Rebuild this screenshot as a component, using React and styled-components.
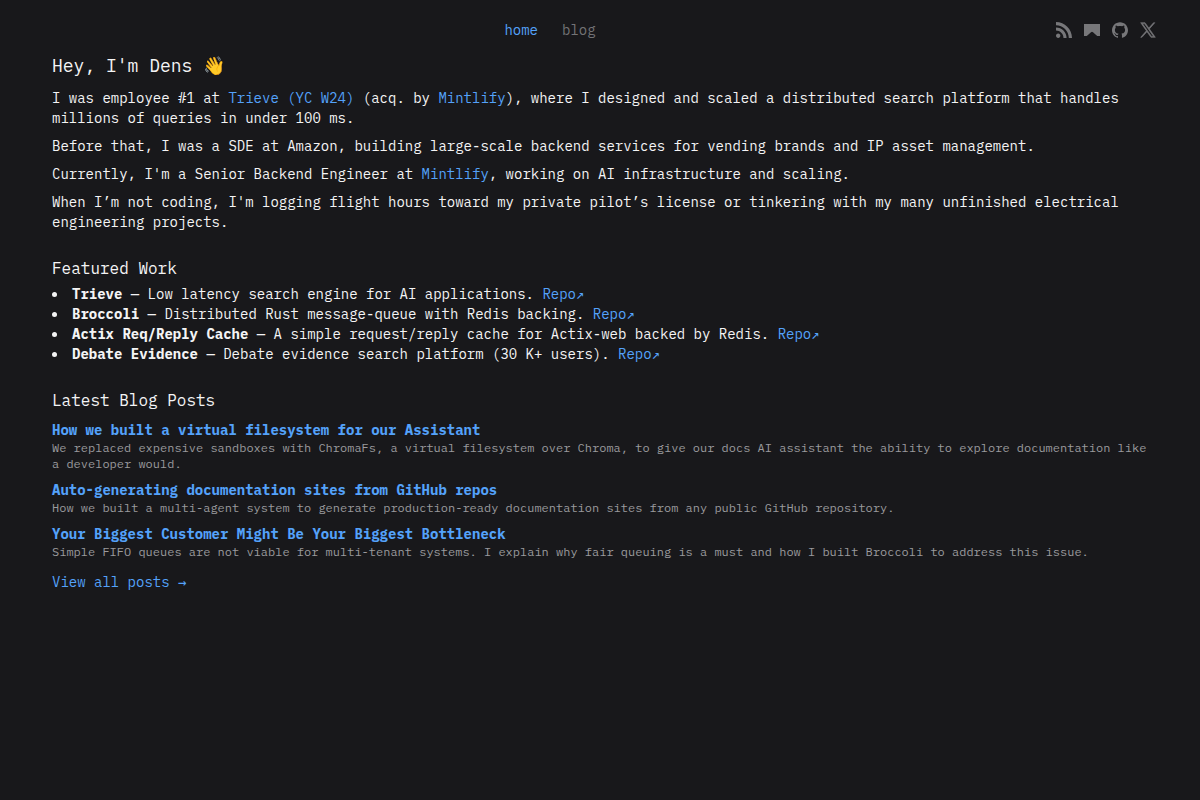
import React from 'react'
import styled, { createGlobalStyle } from 'styled-components'
import { SiGithub, SiRss } from 'react-icons/si'

const GlobalStyle = createGlobalStyle`
  *, *::before, *::after {
    box-sizing: border-box;
    margin: 0;
    padding: 0;
  }

  body {
    min-height: 100vh;
    background: #18181b;
    color: #f4f4f5;
    font-family: 'IBM Plex Mono', 'Liberation Mono', monospace;
    font-size: 14px;
    line-height: 20px;
  }
`

const Page = styled.div`
  padding: 20px 44px 0;
`

const Header = styled.header`
  display: flex;
  align-items: center;
  justify-content: space-between;
  height: 20px;
`

const Main = styled.main`
  padding: 12px 0 0 8px;
  margin-right: -4px;
`

const Nav = styled.nav`
  display: flex;
  gap: 24px;
`

const NavLink = styled.a`
  color: ${({ $active }) => ($active ? '#54a2fa' : '#737376')};
  text-decoration: none;
`

const Socials = styled.div`
  display: flex;
  gap: 12px;
`

const SocialLink = styled.a`
  display: flex;
  color: #77777a;

  svg {
    width: 16px;
    height: 16px;
  }
`

const Title = styled.h1`
  font-size: 18px;
  font-weight: 400;
  line-height: 28px;
  margin-bottom: 8px;
`

const SectionTitle = styled.h2`
  font-size: 16px;
  font-weight: 400;
  line-height: 24px;
`

const Intro = styled.div`
  display: flex;
  flex-direction: column;
  gap: 8px;
`

const Section = styled.section`
  margin-top: 24px;
`

const A = styled.a`
  color: #54a2fa;
  text-decoration: none;
`

const Arrow = styled.span`
  font-family: ${({ $font }) => $font || "'Liberation Mono'"}, monospace;
  line-height: 1;
`

const WorkList = styled.ul`
  margin-top: 4px;
  list-style: disc inside;
`

const Posts = styled.div`
  margin-top: 8px;
  display: flex;
  flex-direction: column;
  gap: 8px;
`

const PostTitle = styled.a`
  display: block;
  color: #54a2fa;
  font-weight: 700;
  text-decoration: none;
`

const PostText = styled.p`
  color: #9a9a9d;
  font-size: 12px;
  line-height: 16px;
`

const AllPosts = styled(A)`
  display: inline-block;
  margin-top: 12px;
`

const BannerIcon = () => (
  <svg viewBox='0 0 16 16' fill='currentColor'>
    <path d='M0 2h16v12h-2.8L9 10.2q-1-.8-2 0L2.8 14H0z' />
  </svg>
)

const XIcon = () => (
  <svg viewBox='0 0 24 24' fill='currentColor' stroke='currentColor' strokeWidth='0.9'>
    <path d='M14.095 10.316 22.286 1h-1.94l-7.116 8.088L7.551 1H1l8.589 12.231L1 23h1.94l7.51-8.543L16.449 23H23zM11.437 13.338l-.872-1.218-6.924-9.688h2.981l5.59 7.821.868 1.219 7.265 10.166h-2.981z' />
  </svg>
)

const work = [
  ['Trieve', 'Low latency search engine for AI applications.'],
  ['Broccoli', 'Distributed Rust message-queue with Redis backing.'],
  [
    'Actix Req/Reply Cache',
    'A simple request/reply cache for Actix-web backed by Redis.',
  ],
  ['Debate Evidence', 'Debate evidence search platform (30 K+ users).'],
]

const posts = [
  {
    title: 'How we built a virtual filesystem for our Assistant',
    text: 'We replaced expensive sandboxes with ChromaFs, a virtual filesystem over Chroma, to give our docs AI assistant the ability to explore documentation like a developer would.',
  },
  {
    title: 'Auto-generating documentation sites from GitHub repos',
    text: 'How we built a multi-agent system to generate production-ready documentation sites from any public GitHub repository.',
  },
  {
    title: 'Your Biggest Customer Might Be Your Biggest Bottleneck',
    text: 'Simple FIFO queues are not viable for multi-tenant systems. I explain why fair queuing is a must and how I built Broccoli to address this issue.',
  },
]

const TopBar = () => (
  <Header>
    <div />
    <Nav>
      <NavLink href='#' $active>home</NavLink>
      <NavLink href='#'>blog</NavLink>
    </Nav>
    <Socials>
      <SocialLink href='#'><SiRss /></SocialLink>
      <SocialLink href='#'><BannerIcon /></SocialLink>
      <SocialLink href='#'><SiGithub /></SocialLink>
      <SocialLink href='#'><XIcon /></SocialLink>
    </Socials>
  </Header>
)

export default function App() {
  return (
    <>
      <GlobalStyle />
      <Page>
        <TopBar />
        <Main>
          <Title>Hey, I'm Dens 👋</Title>
          <Intro>
            <p>
              I was employee #1 at <A href='#'>Trieve (YC W24)</A> (acq. by{' '}
              <A href='#'>Mintlify</A>), where I designed and scaled a
              distributed search platform that handles millions of queries in
              under 100 ms.
            </p>
            <p>
              Before that, I was a SDE at Amazon, building large-scale backend
              services for vending brands and IP asset management.
            </p>
            <p>
              Currently, I'm a Senior Backend Engineer at{' '}
              <A href='#'>Mintlify</A>, working on AI infrastructure and
              scaling.
            </p>
            <p>
              When I’m not coding, I'm logging flight hours toward my private
              pilot’s license or tinkering with my many unfinished electrical
              engineering projects.
            </p>
          </Intro>
          <Section>
            <SectionTitle>Featured Work</SectionTitle>
            <WorkList>
              {work.map(([name, text]) => (
                <li key={name}>
                  <strong>{name}</strong> — {text}{' '}
                  <A href='#'>Repo<Arrow>↗</Arrow></A>
                </li>
              ))}
            </WorkList>
          </Section>
          <Section>
            <SectionTitle>Latest Blog Posts</SectionTitle>
            <Posts>
              {posts.map(({ title, text }) => (
                <article key={title}>
                  <PostTitle href='#'>{title}</PostTitle>
                  <PostText>{text}</PostText>
                </article>
              ))}
            </Posts>
            <AllPosts href='#'>
              View all posts <Arrow $font="'DejaVu Sans Mono'">→</Arrow>
            </AllPosts>
          </Section>
        </Main>
      </Page>
    </>
  )
}
